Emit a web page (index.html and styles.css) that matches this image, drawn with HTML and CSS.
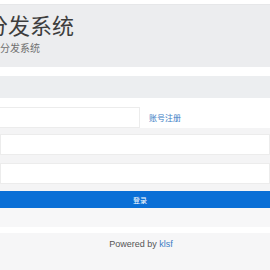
FILE: index.html
```html
<!DOCTYPE html>
<html lang="zh-CN">
<head>
    <meta charset="UTF-8">
    <meta name="viewport" content="width=device-width, initial-scale=1.0">
    <title>分发系统</title>
    <link rel="stylesheet" href="styles.css">
</head>
<body>
    <div class="topbar"></div>
    <div class="jumbotron">
        <h1>分发系统</h1>
        <p>分发系统</p>
    </div>
    <div class="main">
        <div class="notice"></div>
        <form class="login-form">
            <div class="row">
                <input type="text" class="field short">
                <a href="#" class="reg">账号注册</a>
            </div>
            <div class="strip"></div>
            <input type="password" class="field">
            <div class="strip tall"></div>
            <input type="text" class="field">
            <div class="strip thin"></div>
            <button type="submit">登录</button>
        </form>
    </div>
    <div class="footer">
        <div class="band"></div>
        <div class="gap"></div>
        <div class="powered">Powered by <a href="#">klsf</a></div>
    </div>
</body>
</html>
```

FILE: styles.css
```css
body {
    margin: 0;
    font-family: "Liberation Sans", "Noto Sans CJK SC", sans-serif;
    background: #f6f6f7;
    color: #333;
    overflow: hidden;
}

.topbar {
    height: 4px;
    background: #fff;
    border-bottom: 1px solid #e6e7e9;
}

.jumbotron {
    background: #ecedef;
    height: 62px;
    box-sizing: border-box;
    padding-top: 7px;
}

.jumbotron h1 {
    margin: 0 0 0 -14px;
    font-size: 22px;
    font-weight: normal;
    line-height: 30px;
    color: #3d3d3d;
}

.jumbotron p {
    margin: 0;
    font-size: 10px;
    line-height: 14px;
    color: #707070;
}

.main {
    background: #fff;
    padding-top: 9px;
}

.notice {
    height: 22px;
    background: #eceef0;
    margin-bottom: 9px;
}

.login-form {
    display: flex;
    flex-direction: column;
}

.row {
    display: flex;
    align-items: center;
    gap: 9px;
}

.field {
    display: block;
    box-sizing: border-box;
    height: 21px;
    margin: 0;
    border: 1px solid #ececec;
    background: #fff;
    padding: 0 6px;
}

.field.short {
    width: 142px;
    margin-left: -2px;
}

.reg {
    font-size: 8px;
    color: #3a7cc4;
    text-decoration: none;
}

.strip {
    height: 6px;
    background: #f4f4f5;
}

.strip.tall {
    height: 8px;
}

.strip.thin {
    height: 7px;
}

.login-form button {
    height: 17px;
    border: none;
    background: #0a6fd6;
    color: #fff;
    font-size: 7px;
    padding: 0 0 0 10px;
    font-family: inherit;
}

.footer {
    background: #f6f6f7;
}

.band {
    height: 19px;
    background: #f7f7f8;
}

.gap {
    height: 6px;
    background: #fff;
}

.powered {
    text-align: center;
    font-size: 9px;
    padding: 6px 0 0 12px;
    color: #555;
}

.powered a {
    color: #3a7cc4;
    text-decoration: none;
}
```
